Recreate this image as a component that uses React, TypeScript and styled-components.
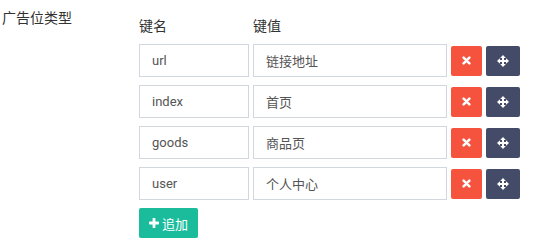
import styled, { createGlobalStyle } from 'styled-components';

const GlobalStyle = createGlobalStyle`
  body {
    margin: 0;
    background: #ffffff;
    font-family: Roboto, "Noto Sans CJK SC", sans-serif;
    font-size: 13px;
    color: #333;
  }
`;

const Page = styled.div`
  display: flex;
  width: 535px;
  height: 244px;
`;

const FieldLabel = styled.div`
  width: 137px;
  padding-left: 2px;
  padding-top: 9px;
  font-size: 14px;
  line-height: 18px;
  color: #333;
`;

const Form = styled.div`
  display: flex;
  flex-direction: column;
  gap: 8px;
  padding-top: 17px;
`;

const Grid = styled.div`
  display: grid;
  grid-template-columns: 110px 194px 31px 34px;
  column-gap: 4px;
  align-items: center;
`;

const HeadCell = styled.div`
  font-size: 14px;
  line-height: 18px;
  height: 19px;
  color: #333;
`;

const Field = styled.div`
  box-sizing: border-box;
  height: 33px;
  border: 1px solid #d2d6de;
  padding: 0 12px;
  display: flex;
  align-items: center;
  color: #555;
`;

const IconButton = styled.button<{ $tone: 'danger' | 'dark' }>`
  box-sizing: border-box;
  height: 30px;
  border: none;
  border-radius: 2px;
  padding: 0;
  display: flex;
  align-items: center;
  justify-content: center;
  background: ${p => (p.$tone === 'danger' ? '#f6533f' : '#434b69')};
`;

const AddButton = styled.button`
  box-sizing: border-box;
  width: 59px;
  height: 30px;
  border: none;
  border-radius: 2px;
  background: #1abc9c;
  color: #fff;
  font-family: inherit;
  font-size: 13px;
  display: flex;
  align-items: center;
  justify-content: center;
  gap: 3px;
  padding: 0;
`;

const TimesIcon = () => (
  <svg width="9" height="9" viewBox="0 0 10 10">
    <path d="M1.8 1.8 L8.2 8.2 M8.2 1.8 L1.8 8.2" stroke="#fff" strokeWidth="2.8" strokeLinecap="round" />
  </svg>
);

const ArrowsIcon = () => (
  <svg width="12" height="12" viewBox="0 0 12 12" fill="#fff">
    <rect x="5" y="2" width="2" height="8" />
    <rect x="2" y="5" width="8" height="2" />
    <polygon points="6,0 8.8,3 3.2,3" />
    <polygon points="6,12 8.8,9 3.2,9" />
    <polygon points="0,6 3,3.2 3,8.8" />
    <polygon points="12,6 9,3.2 9,8.8" />
  </svg>
);

const PlusIcon = () => (
  <svg width="10" height="10" viewBox="0 0 10 10" fill="#fff">
    <rect x="3.6" y="0" width="2.8" height="10" rx="0.6" />
    <rect x="0" y="3.6" width="10" height="2.8" rx="0.6" />
  </svg>
);

const rows = [
  { key: 'url', value: '链接地址' },
  { key: 'index', value: '首页' },
  { key: 'goods', value: '商品页' },
  { key: 'user', value: '个人中心' },
];

export default function App() {
  return (
    <>
      <GlobalStyle />
      <Page>
        <FieldLabel>广告位类型</FieldLabel>
        <Form>
          <Grid>
            <HeadCell>键名</HeadCell>
            <HeadCell>键值</HeadCell>
          </Grid>
          {rows.map(r => (
            <Grid key={r.key}>
              <Field>{r.key}</Field>
              <Field>{r.value}</Field>
              <IconButton $tone="danger"><TimesIcon /></IconButton>
              <IconButton $tone="dark"><ArrowsIcon /></IconButton>
            </Grid>
          ))}
          <div>
            <AddButton><PlusIcon />追加</AddButton>
          </div>
        </Form>
      </Page>
    </>
  );
}
